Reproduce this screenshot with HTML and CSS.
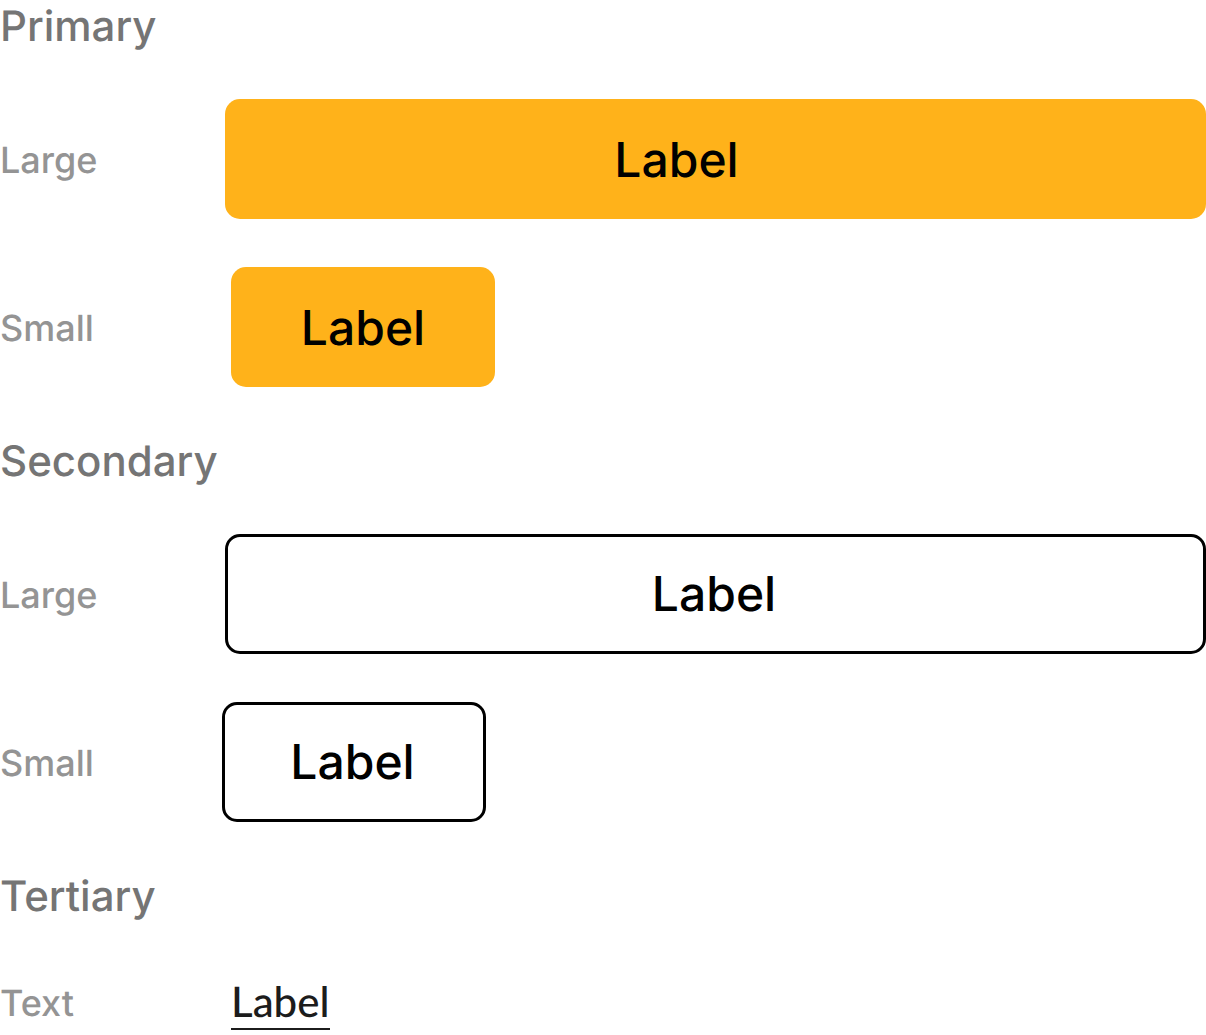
FILE: index.html
```html
<!DOCTYPE html>
<html lang="en">
<head>
<meta charset="utf-8">
<title>Buttons</title>
<link rel="stylesheet" href="styles.css">
</head>
<body>
<main class="sheet">
  <section class="group">
    <h2 class="group-title">Primary</h2>
    <div class="row"><span class="size">Large</span><button class="btn primary large" type="button">Label</button></div>
    <div class="row"><span class="size">Small</span><button class="btn primary small" type="button">Label</button></div>
  </section>
  <section class="group">
    <h2 class="group-title">Secondary</h2>
    <div class="row"><span class="size">Large</span><button class="btn secondary large" type="button">Label</button></div>
    <div class="row"><span class="size">Small</span><button class="btn secondary small" type="button">Label</button></div>
  </section>
  <section class="group">
    <h2 class="group-title">Tertiary</h2>
    <div class="row"><span class="size">Text</span><a class="text-link" href="#">Label</a></div>
  </section>
</main>
</body>
</html>
```
FILE: styles.css
```css
* { box-sizing: border-box; }
body {
  margin: 0;
  background: #fff;
  font-family: Inter, "Liberation Sans", sans-serif;
  text-rendering: geometricPrecision;
}
.sheet {
  display: flex;
  flex-direction: column;
  gap: 48px;
}
.group {
  display: flex;
  flex-direction: column;
  gap: 48px;
}
.group-title {
  margin: 0;
  padding-top: 3px;
  font-size: 42px;
  line-height: 48px;
  font-weight: 500;
  color: #757575;
}
.row {
  display: grid;
  grid-template-columns: 225px 1fr;
  align-items: center;
  min-height: 66px;
}
.size {
  padding-top: 2px;
  font-size: 36px;
  line-height: 44px;
  font-weight: 500;
  color: #949494;
}
.btn {
  height: 120px;
  border: 0;
  border-radius: 15px;
  padding: 0;
  font: 500 48px/58px Inter, "Liberation Sans", sans-serif;
  text-rendering: inherit;
  color: #000;
}
.primary {
  padding-top: 2px;
  background: #ffb21a;
}
.primary.large { padding-right: 78px; }
.secondary {
  padding-right: 3px;
  background: #fff;
  border: 3px solid #000;
}
.small {
  width: 264px;
  justify-self: start;
}
.primary.small { margin-left: 6px; }
.secondary.small { margin-left: -3px; }
.text-link {
  justify-self: start;
  margin-left: 6px;
  font: 500 42px/54px Lato, sans-serif;
  color: #1c1c1c;
  text-decoration: none;
  border-bottom: 2px solid #1c1c1c;
}
```
